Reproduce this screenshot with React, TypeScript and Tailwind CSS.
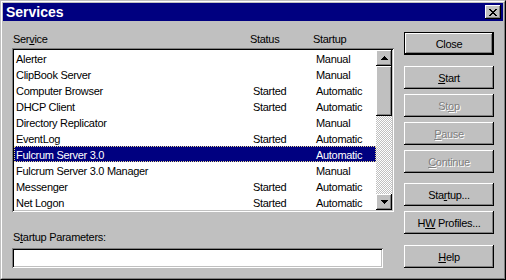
import React from 'react';

// Windows NT style "Services" dialog
const font = "font-['Liberation_Sans',Arial,sans-serif]";
const raised = 'shadow-[inset_-1px_-1px_#000,inset_1px_1px_#fff,inset_-2px_-2px_#808080,inset_2px_2px_#c0c0c0]';
const sunken = 'shadow-[inset_1px_1px_#808080,inset_-1px_-1px_#fff,inset_2px_2px_#000,inset_-2px_-2px_#c0c0c0]';

const services: [string, string, string][] = [
    ['Alerter', '', 'Manual'],
    ['ClipBook Server', '', 'Manual'],
    ['Computer Browser', 'Started', 'Automatic'],
    ['DHCP Client', 'Started', 'Automatic'],
    ['Directory Replicator', '', 'Manual'],
    ['EventLog', 'Started', 'Automatic'],
    ['Fulcrum Server 3.0', '', 'Automatic'],
    ['Fulcrum Server 3.0 Manager', '', 'Manual'],
    ['Messenger', 'Started', 'Automatic'],
    ['Net Logon', 'Started', 'Automatic'],
];

const Pixels = ({ rows, w, h }: { rows: string[]; w: number; h: number }) => (
    <svg width={w} height={h} viewBox={`0 0 ${w} ${h}`} shapeRendering="crispEdges">
        {rows.flatMap((r, y) =>
            r.split('').map((c, x) => (c === '#' ? <rect key={`${x}-${y}`} x={x} y={y} width={1} height={1} fill="#000" /> : null))
        )}
    </svg>
);

const CloseGlyph = () => (
    <Pixels w={8} h={7} rows={['##....##', '.##..##.', '..####..', '...##...', '..####..', '.##..##.', '##....##']} />
);

const UpArrow = () => <Pixels w={7} h={4} rows={['...#...', '..###..', '.#####.', '#######']} />;
const DownArrow = () => <Pixels w={7} h={4} rows={['#######', '.#####.', '..###..', '...#...']} />;

interface BtnProps {
    children: React.ReactNode;
    disabled?: boolean;
    isDefault?: boolean;
    className?: string;
}

const Btn = ({ children, disabled, isDefault, className = '' }: BtnProps) => (
    <div className={`w-[90px] h-[23px] bg-[#c0c0c0] ${isDefault ? 'border border-black' : ''} ${className}`}>
        <div
            className={`w-full h-full flex items-center justify-center leading-[13px] pt-px ${raised} ${
                disabled ? 'text-[#808080] [text-shadow:1px_1px_0_#fff]' : 'text-black'
            }`}
        >
            {children}
        </div>
    </div>
);

const ScrollBtn = ({ children }: { children: React.ReactNode }) => (
    <div className={`w-[16px] h-[16px] bg-[#c0c0c0] flex items-center justify-center ${raised}`}>{children}</div>
);

export default function App() {
    return (
        <div className={`w-[506px] h-[280px] bg-[#c0c0c0] text-[11px] tracking-[-0.3px] ${font}`}>
            <div className="w-full h-full border border-t-[#c0c0c0] border-l-[#c0c0c0] border-b-black border-r-black">
                <div className="w-full h-full border border-t-white border-l-white border-b-[#808080] border-r-[#808080] p-px flex flex-col">
                    {/* title bar */}
                    <div className="h-[18px] bg-[#000080] flex items-center justify-between pl-[3px] pr-[2px]">
                        <span className="text-white font-bold text-[14px] tracking-normal leading-[16px]">Services</span>
                        <div className={`w-[16px] h-[14px] bg-[#c0c0c0] flex items-center justify-center ${raised}`}>
                            <CloseGlyph />
                        </div>
                    </div>

                    <div className="flex flex-1 pl-[9px]">
                        {/* left side */}
                        <div className="w-[382px] flex flex-col pt-[12px]">
                            <div className="flex h-[13px] leading-[13px]">
                                <span className="w-[238px] pl-px">
                                    Ser<u>v</u>ice
                                </span>
                                <span className="w-[63px]">Status</span>
                                <span>Startup</span>
                            </div>

                            <div className={`mt-[2px] h-[164px] bg-white p-[2px] flex ${sunken}`}>
                                <div className="w-[362px] flex flex-col">
                                    {services.map(([name, status, startup], i) => {
                                        const selected = i === 6;
                                        return (
                                            <div
                                                key={name}
                                                className={`flex h-[16px] leading-[18px] ${
                                                    selected
                                                        ? 'bg-[#000080] text-white outline-1 outline-dotted outline-[#e8d890] -outline-offset-1'
                                                        : 'text-black'
                                                }`}
                                            >
                                                <span className="w-[239px] pl-[2px]">{name}</span>
                                                <span className="w-[63px]">{status}</span>
                                                <span>{startup}</span>
                                            </div>
                                        );
                                    })}
                                </div>
                                <div className="w-[16px] flex flex-col">
                                    <ScrollBtn>
                                        <UpArrow />
                                    </ScrollBtn>
                                    <div className={`h-[50px] bg-[#c0c0c0] ${raised}`} />
                                    <div className="flex-1 bg-[repeating-conic-gradient(#c0c0c0_0_25%,#fff_0_50%)] bg-[length:2px_2px]" />
                                    <ScrollBtn>
                                        <DownArrow />
                                    </ScrollBtn>
                                </div>
                            </div>

                            <div className="mt-[19px] h-[13px] leading-[13px] pl-px">
                                S<u>t</u>artup Parameters:
                            </div>
                            <div className={`mt-[4px] w-[371px] h-[20px] bg-white ${sunken}`} />
                        </div>

                        {/* right side buttons */}
                        <div className="ml-[10px] flex flex-col pt-[11px]">
                            <Btn isDefault>Close</Btn>
                            <Btn className="mt-[11px]">
                                <span>
                                    <u>S</u>tart
                                </span>
                            </Btn>
                            <Btn disabled className="mt-[5px]">
                                <span>
                                    St<u>o</u>p
                                </span>
                            </Btn>
                            <Btn disabled className="mt-[5px]">
                                <span>
                                    <u>P</u>ause
                                </span>
                            </Btn>
                            <Btn disabled className="mt-[5px]">
                                <span>
                                    <u>C</u>ontinue
                                </span>
                            </Btn>
                            <Btn className="mt-[10px]">
                                <span>
                                    Sta<u>r</u>tup...
                                </span>
                            </Btn>
                            <Btn className="mt-[5px]">
                                <span>
                                    H<u>W</u> Profiles...
                                </span>
                            </Btn>
                            <Btn className="mt-[11px]">
                                <span>
                                    <u>H</u>elp
                                </span>
                            </Btn>
                        </div>
                    </div>
                </div>
            </div>
        </div>
    );
}
